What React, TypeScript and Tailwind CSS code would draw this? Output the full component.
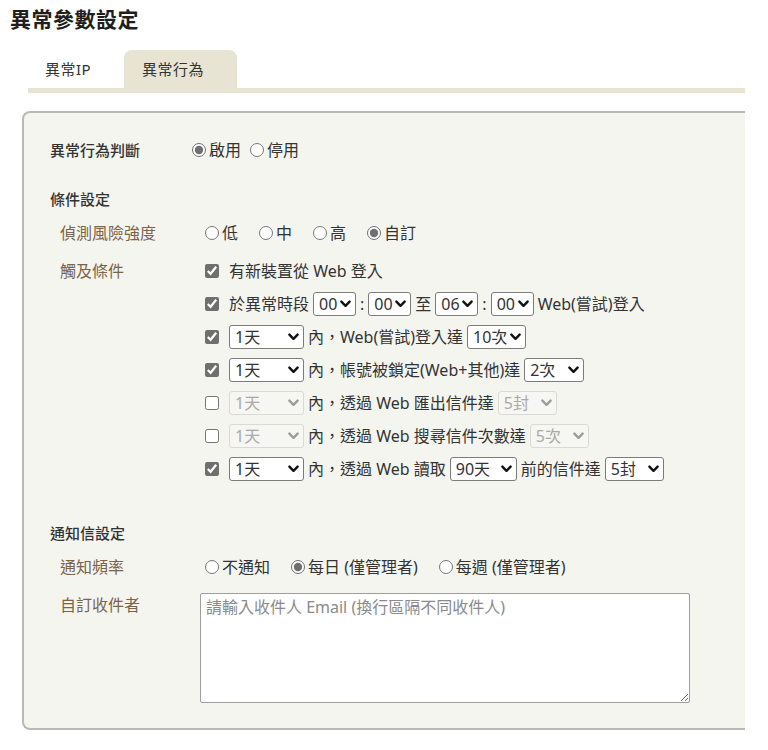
import React from 'react'
import clsx from 'clsx'

function Chevron({ disabled }: { disabled?: boolean }) {
  return (
    <svg
      width="11"
      height="8"
      viewBox="0 0 11 8"
      className="pointer-events-none absolute right-[5px] top-1/2 -translate-y-1/2"
    >
      <path
        d="M1.4 1.6 L5.5 5.8 L9.6 1.6"
        fill="none"
        className={disabled ? 'stroke-[#9c9c9c]' : 'stroke-[#111111]'}
        strokeWidth="2.4"
        strokeLinecap="round"
        strokeLinejoin="round"
      />
    </svg>
  )
}

function Select({ value, w, disabled }: { value: string; w: string; disabled?: boolean }) {
  return (
    <span className={clsx('relative inline-flex h-[24px] shrink-0', w)}>
      <select
        disabled={disabled}
        defaultValue={value}
        className={clsx(
          'h-full w-full appearance-none rounded-[3px] border pl-[5px] pr-[16px] text-[16px] leading-[22px] outline-none',
          disabled
            ? 'border-[#d9d9d6] bg-[#f6f6f2] text-[#a9a9a9]'
            : 'border-[#7c7c7c] bg-white text-[#333]'
        )}
      >
        <option>{value}</option>
      </select>
      <Chevron disabled={disabled} />
    </span>
  )
}

function Radio({ label, name, checked }: { label: string; name: string; checked?: boolean }) {
  return (
    <label className="inline-flex items-center gap-[3px]">
      <input
        type="radio"
        name={name}
        defaultChecked={checked}
        className="m-0 h-[14px] w-[14px] accent-[#6f6f6f]"
      />
      <span>{label}</span>
    </label>
  )
}

function Check({ checked }: { checked?: boolean }) {
  return (
    <input
      type="checkbox"
      defaultChecked={checked}
      className="m-0 mr-[6px] h-[14px] w-[14px] shrink-0 accent-[#6f6f6f]"
    />
  )
}

function CondRow({ children }: { children: React.ReactNode }) {
  return <div className="flex h-[33px] items-center gap-[4px] pl-[5px] whitespace-nowrap">{children}</div>
}

export default function App() {
  return (
    <div className="min-h-[750px] w-[768px] bg-white font-['Noto_Sans','Noto_Sans_CJK_TC',sans-serif] text-[16px] text-[#333]">
      <h1 className="pl-[10px] pt-[5px] text-[21px] font-bold leading-[28px] tracking-[0.5px] text-[#1e1e1e]">
        異常參數設定
      </h1>

      {/* Tabs */}
      <div className="ml-[28px] mt-[17px] flex h-[43px] w-[717px] items-end border-b-[5px] border-[#e8e4d3] text-[15px]">
        <div className="flex h-[38px] w-[96px] items-center pl-[17px] tracking-[0.5px]">異常IP</div>
        <div className="flex h-[38px] w-[113px] items-center rounded-t-[8px] bg-[#e8e4d3] pl-[18px] tracking-[0.5px]">
          異常行為
        </div>
      </div>

      {/* Panel */}
      <div className="ml-[22px] mt-[18px] w-[723px] rounded-l-[8px] border-2 border-r-0 border-[#b9b9b6] bg-[#f5f5f0] pb-[25px] pt-[20px] leading-[20px]">
        <div className="flex h-[34px] items-center pl-[26px]">
          <div className="w-[142px] text-[15px] font-medium">異常行為判斷</div>
          <div className="flex items-center gap-[9px]">
            <Radio name="enable" label="啟用" checked />
            <Radio name="enable" label="停用" />
          </div>
        </div>

        <div className="mt-[15px] flex h-[34px] items-center pl-[26px] text-[15px] font-medium">條件設定</div>

        <div className="flex h-[34px] items-center pl-[36px]">
          <div className="w-[140px] text-[#7b6449]">偵測風險強度</div>
          <div className="flex items-center gap-[21px] pl-[5px]">
            <Radio name="risk" label="低" />
            <Radio name="risk" label="中" />
            <Radio name="risk" label="高" />
            <Radio name="risk" label="自訂" checked />
          </div>
        </div>

        <div className="mt-[4px] flex pl-[36px]">
          <div className="flex h-[33px] w-[140px] items-center text-[#7b6449]">觸及條件</div>
          <div className="flex flex-col">
            <CondRow>
              <Check checked />
              <span>有新裝置從 Web 登入</span>
            </CondRow>
            <CondRow>
              <Check checked />
              <span>於異常時段</span>
              <Select value="00" w="w-[43px]" />
              <span>:</span>
              <Select value="00" w="w-[43px]" />
              <span>至</span>
              <Select value="06" w="w-[43px]" />
              <span>:</span>
              <Select value="00" w="w-[43px]" />
              <span>Web(嘗試)登入</span>
            </CondRow>
            <CondRow>
              <Check checked />
              <Select value="1天" w="w-[75px]" />
              <span>內，Web(嘗試)登入達</span>
              <Select value="10次" w="w-[59px]" />
            </CondRow>
            <CondRow>
              <Check checked />
              <Select value="1天" w="w-[75px]" />
              <span>內，帳號被鎖定(Web+其他)達</span>
              <Select value="2次" w="w-[60px]" />
            </CondRow>
            <CondRow>
              <Check />
              <Select value="1天" w="w-[75px]" disabled />
              <span>內，透過 Web 匯出信件達</span>
              <Select value="5封" w="w-[59px]" disabled />
            </CondRow>
            <CondRow>
              <Check />
              <Select value="1天" w="w-[75px]" disabled />
              <span>內，透過 Web 搜尋信件次數達</span>
              <Select value="5次" w="w-[59px]" disabled />
            </CondRow>
            <CondRow>
              <Check checked />
              <Select value="1天" w="w-[75px]" />
              <span>內，透過 Web 讀取</span>
              <Select value="90天" w="w-[67px]" />
              <span>前的信件達</span>
              <Select value="5封" w="w-[59px]" />
            </CondRow>
          </div>
        </div>

        <div className="mt-[31px] flex h-[34px] items-center pl-[26px] text-[15px] font-medium">通知信設定</div>

        <div className="flex h-[34px] items-center pl-[36px]">
          <div className="w-[140px] text-[#7b6449]">通知頻率</div>
          <div className="flex items-center gap-[21px] pl-[5px]">
            <Radio name="freq" label="不通知" />
            <Radio name="freq" label="每日 (僅管理者)" checked />
            <Radio name="freq" label="每週 (僅管理者)" />
          </div>
        </div>

        <div className="mt-[9px] flex pl-[36px]">
          <div className="w-[140px] pt-[2px] text-[#7b6449]">自訂收件者</div>
          <textarea
            placeholder="請輸入收件人 Email (換行區隔不同收件人)"
            className="h-[110px] w-[490px] rounded-[2px] border border-[#9e9e9e] bg-white px-[5px] py-[3px] text-[16px] leading-[20px] text-[#333] outline-none placeholder:text-[#8a8a8a]"
          />
        </div>
      </div>
    </div>
  )
}
